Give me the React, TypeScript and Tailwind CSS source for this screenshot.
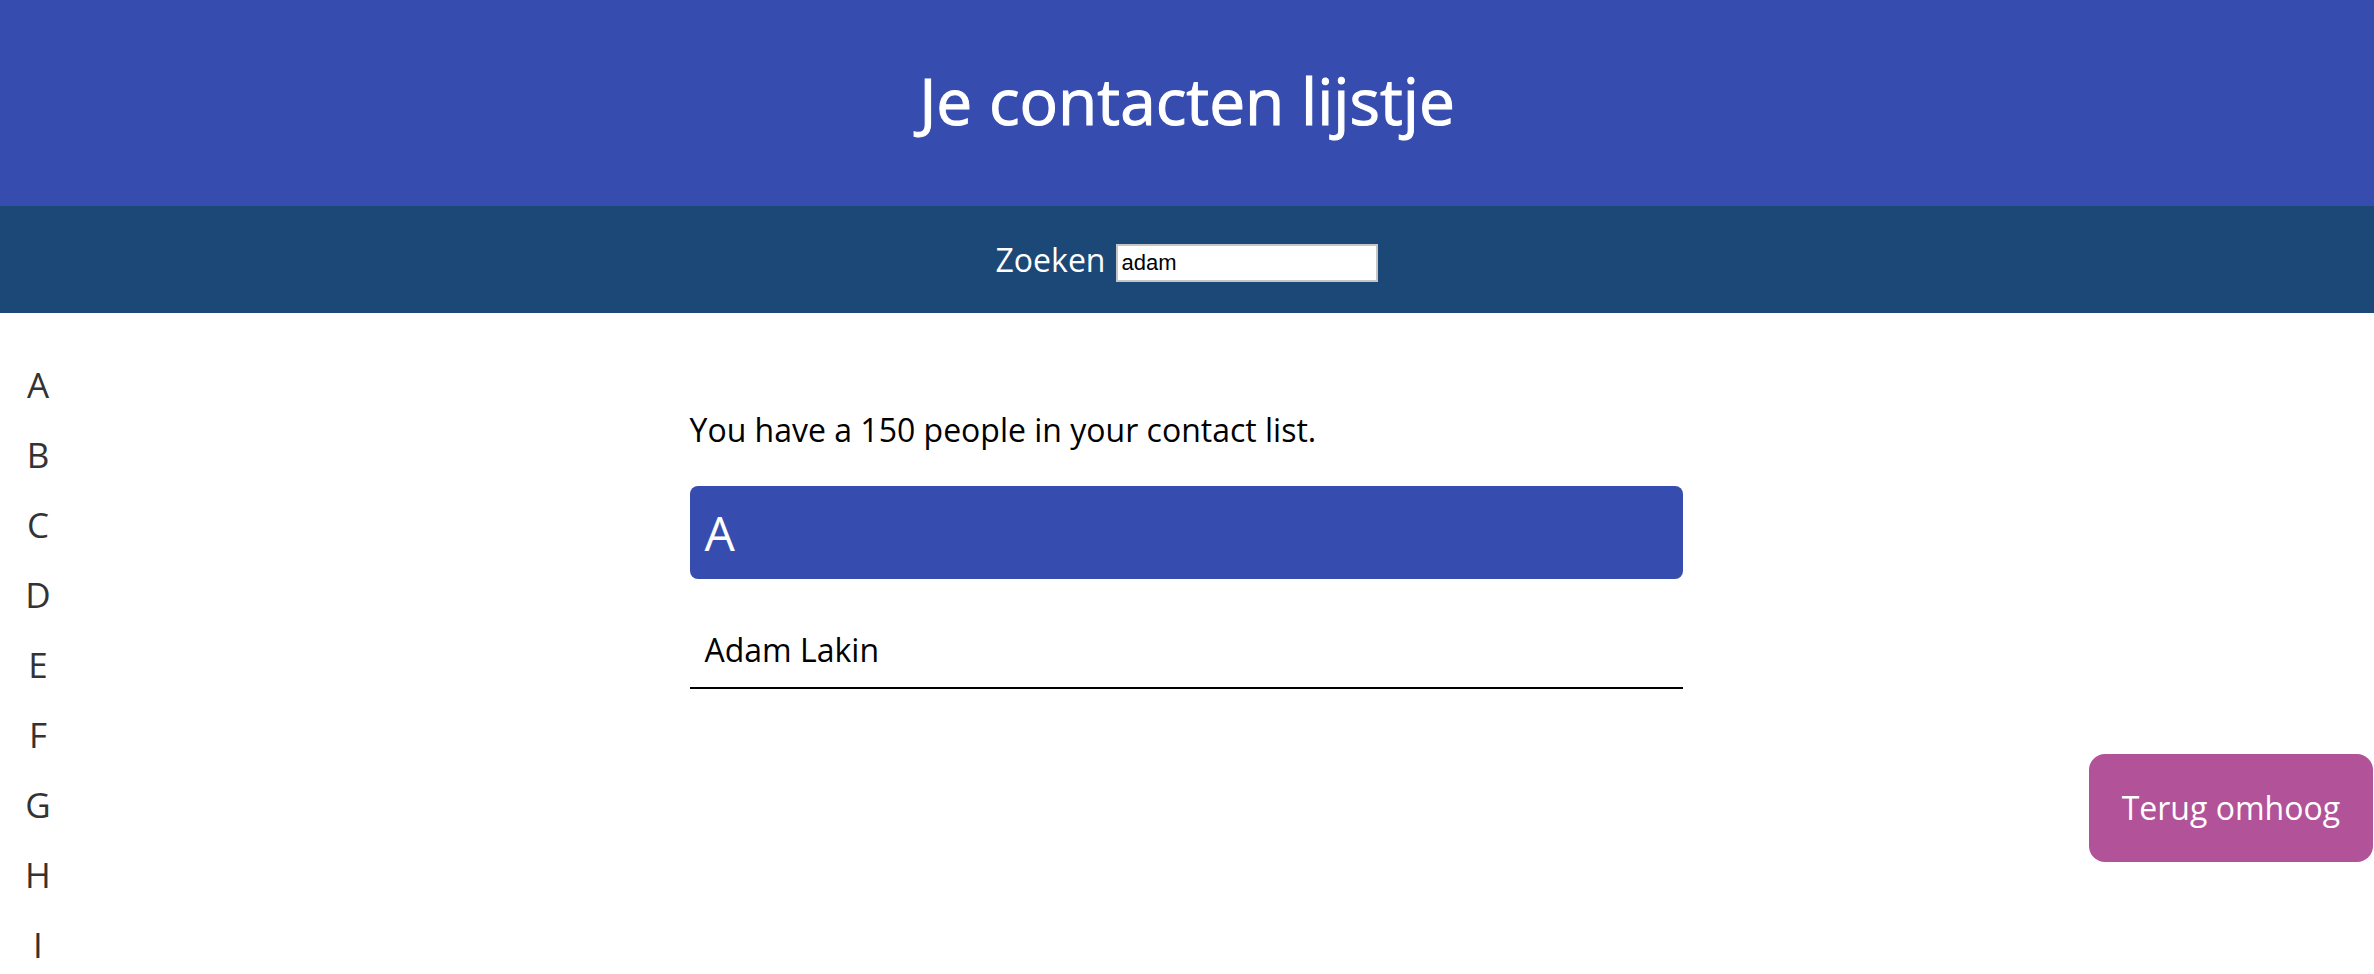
import React, { useState } from 'react';

const letters = 'ABCDEFGHIJKLMNOPQRSTUVWXYZ'.split('');

const App = () => {
    const [search, setSearch] = useState('adam');

    return (
        <div className="min-h-screen bg-white font-['Open_Sans',sans-serif]">
            <header className="flex h-[206px] items-center justify-center bg-[#364daf]">
                <h1 className="-mt-[4px] text-[64px] font-normal leading-none text-white [-webkit-text-stroke:1px_white]">Je contacten lijstje</h1>
            </header>

            <nav className="flex h-[107px] items-center justify-center bg-[#1c4878]">
                <label className="text-[32px] leading-none text-white">Zoeken</label>
                <input
                    value={search}
                    onChange={(e) => setSearch(e.target.value)}
                    className="ml-[11px] mt-[7px] h-[38px] w-[262px] border-2 border-[#c6c6c6] bg-white pl-[3px] font-['Liberation_Sans',sans-serif] text-[22px] text-black outline-none"
                />
            </nav>

            <div className="grid grid-cols-[1fr_991px_1fr]">
                <ul className="w-[76px] pt-[37px] text-center text-[35px] text-[#333]">
                    {letters.map((l) => (
                        <li key={l} className="flex h-[70px] items-center justify-center">{l}</li>
                    ))}
                </ul>

                <main className="-ml-[2px] pt-[94px]">
                    <p className="flex h-[46px] items-center text-[32px] text-black">You have a 150 people in your contact list.</p>

                    <div className="mt-[33px] flex h-[93px] items-center rounded-lg bg-[#364daf] px-[15px]">
                        <h2 className="text-[48px] leading-none text-white">A</h2>
                    </div>

                    <div className="mt-[47px] border-b-2 border-black pb-[13px] pl-[15px]">
                        <span className="block h-[48px] text-[32px] leading-[48px] text-black">Adam Lakin</span>
                    </div>
                </main>

                <div />
            </div>

            <button className="fixed bottom-[112px] right-[1px] h-[108px] rounded-2xl bg-[#b25399] px-[33px] text-[32px] text-white">
                Terug omhoog
            </button>
        </div>
    );
};

export default App;
